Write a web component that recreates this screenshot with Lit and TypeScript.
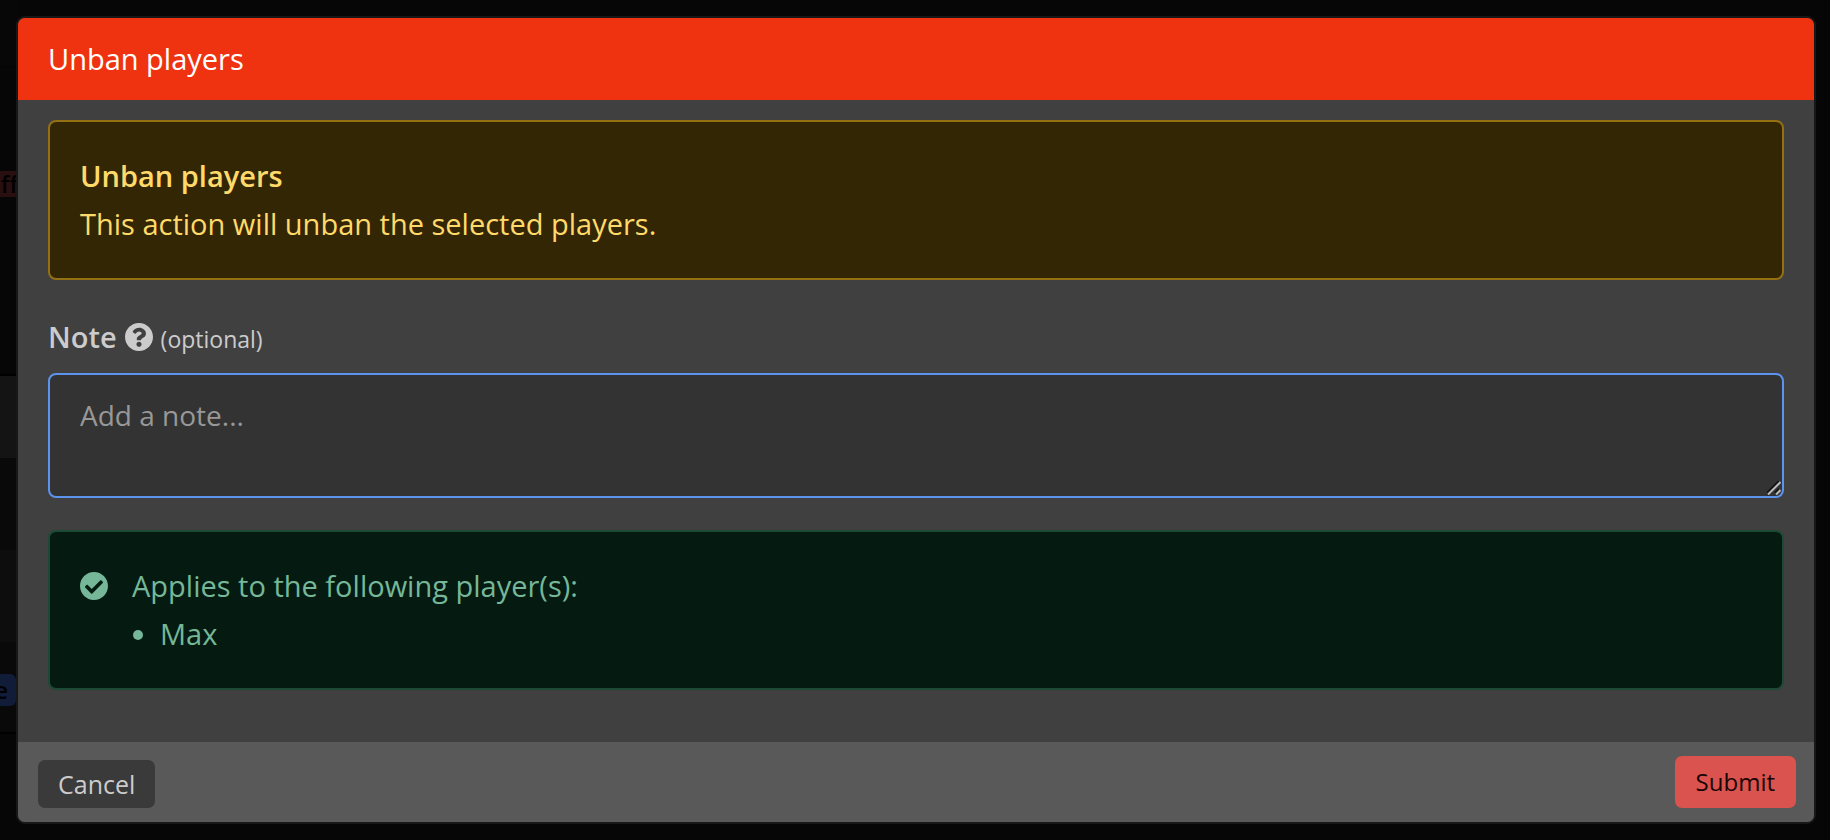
import { LitElement, html, css } from "lit";
import { customElement, property, state } from "lit/decorators.js";

@customElement("page-behind")
class PageBehind extends LitElement {
  static styles = css`
    :host {
      display: block;
      color: #000;
      font-size: 24px;
      font-weight: 600;
      line-height: 28px;
    }
    .top {
      height: 66px;
      border-bottom: 2px solid #050505;
      background: #070707;
    }
    .intro {
      height: 308px;
      padding-top: 103px;
      box-sizing: border-box;
      background: #060606;
      border-bottom: 2px solid #000;
    }
    .mark {
      display: flex;
      justify-content: flex-end;
      width: 18px;
      height: 26px;
      line-height: 26px;
      overflow: hidden;
      background: #2a0f10;
    }
    .row {
      height: 92px;
      box-sizing: border-box;
      background: #090909;
    }
    .head {
      height: 82px;
      background: #141414;
    }
    .alt {
      background: #0d0d0d;
    }
    .last {
      padding-top: 32px;
      border-bottom: 2px solid #000;
    }
    .badge {
      display: flex;
      justify-content: flex-end;
      width: 16px;
      height: 32px;
      padding-right: 8px;
      box-sizing: border-box;
      border-radius: 0 6px 6px 0;
      background: #111c38;
      line-height: 32px;
    }
  `;

  render() {
    return html`
      <div class="top"></div>
      <div class="intro"><span class="mark">eff</span></div>
      <div class="row head"></div>
      <div class="row"></div>
      <div class="row alt"></div>
      <div class="row last"><span class="badge">e</span></div>
    `;
  }
}

@customElement("unban-dialog")
class UnbanDialog extends LitElement {
  @property({ attribute: false }) players: string[] = [];
  @state() private note = "";

  static styles = css`
    :host {
      display: block;
      color: #ccc;
      font-size: 29px;
      line-height: 48px;
    }
    .dialog {
      overflow: hidden;
      border: 2px solid #181818;
      border-radius: 9px;
      background: #404040;
    }
    .header {
      padding: 17px 30px;
      background: #ef3311;
      color: #fff;
    }
    .title {
      margin: 0;
      font-size: 29px;
      font-weight: 400;
    }
    .body {
      display: flex;
      flex-direction: column;
      padding: 20px 30px 52px;
    }
    .callout {
      padding: 30px;
      border: 2px solid #947013;
      border-radius: 8px;
      background: #332604;
      color: #ffda6a;
    }
    .lead {
      margin: 0;
      font-size: 29px;
      font-weight: 600;
    }
    .text {
      margin: 0;
    }
    .label {
      display: flex;
      align-items: baseline;
      gap: 8px;
      margin: 33px 0 12px;
    }
    .name {
      font-weight: 600;
    }
    .icon {
      display: block;
      width: 28px;
      height: 28px;
      flex: none;
    }
    .help {
      align-self: center;
    }
    .optional {
      font-size: 23px;
      line-height: 34px;
    }
    .field {
      display: grid;
      position: relative;
    }
    .note {
      display: block;
      width: 100%;
      height: 125px;
      box-sizing: border-box;
      padding: 16px 30px;
      border: 2px solid #5c93ed;
      border-radius: 8px;
      outline: none;
      background: #333;
      color: #ccc;
      font: inherit;
      font-size: 28px;
      resize: none;
    }
    .note::placeholder {
      color: #989898;
    }
    .grip {
      position: absolute;
      right: 3px;
      bottom: 3px;
      width: 14px;
      height: 14px;
      pointer-events: none;
    }
    .applies {
      display: flex;
      gap: 24px;
      margin-top: 32px;
      border-color: #1d4a35;
      background: #051b11;
      color: #75b798;
    }
    .applies .icon {
      margin-top: 10px;
    }
    .players {
      margin: 0;
      padding-left: 28px;
    }
    .footer {
      display: flex;
      align-items: flex-end;
      justify-content: space-between;
      padding: 14px 18px 14px 20px;
      background: #595959;
    }
    .button {
      margin: 0;
      border: 0;
      border-radius: 7px;
      font: inherit;
      font-size: 25px;
      line-height: 34px;
      cursor: pointer;
    }
    .cancel {
      padding: 7px 20px;
      background: #3a3a3a;
      color: #ccc;
    }
    .submit {
      padding: 9px 21px;
      background: #da534f;
      color: #180404;
      font-size: 24px;
    }
  `;

  private onInput(e: Event) {
    this.note = (e.target as HTMLTextAreaElement).value;
  }

  render() {
    return html`
      <section class="dialog" role="dialog" aria-labelledby="title">
        <header class="header"><h1 class="title" id="title">Unban players</h1></header>
        <div class="body">
          <div class="callout">
            <h2 class="lead">Unban players</h2>
            <p class="text">This action will unban the selected players.</p>
          </div>
          <label class="label" for="note">
            <span class="name">Note</span>
            <svg class="icon help" viewBox="8 8 496 496" fill="currentColor" aria-hidden="true">
              <path
                d="M504 256c0 137-111 248-248 248S8 393 8 256 119 8 256 8s248 111 248 248zM262.700 90c-54.500 0-89.300 23-116.500 63.800-3.500 5.300-2.400 12.400 2.700 16.300l34.700 26.300c5.200 3.900 12.600 3 16.700-2.100 17.900-22.700 30.100-35.800 57.300-35.800 20.400 0 45.700 13.100 45.700 33 0 15-12.400 22.700-32.500 34C247.100 238.500 216 254.900 216 296v4c0 6.600 5.400 12 12 12h56c6.600 0 12-5.400 12-12v-1.300c0-28.500 83.200-29.600 83.200-106.700 0-58-60.200-102-116.500-102zM256 338c-25.400 0-46 20.600-46 46s20.600 46 46 46 46-20.600 46-46-20.600-46-46-46z"
              />
            </svg>
            <span class="optional">(optional)</span>
          </label>
          <div class="field">
            <textarea
              class="note"
              id="note"
              placeholder="Add a note..."
              .value=${this.note}
              @input=${this.onInput}
            ></textarea>
            <svg class="grip" viewBox="0 0 14 14" fill="none" stroke-width="2" aria-hidden="true">
              <path d="M0 12L12 0M8 12L12 8" stroke="#111" />
              <path d="M1 13.500L13.500 1M9 13.500L13.500 9" stroke="#bbb" />
            </svg>
          </div>
          <div class="callout applies">
            <svg class="icon" viewBox="8 8 496 496" fill="currentColor" aria-hidden="true">
              <path
                d="M504 256c0 137-111 248-248 248S8 393 8 256 119 8 256 8s248 111 248 248zM227.300 387.300l184-184c6.200-6.200 6.200-16.400 0-22.600l-22.600-22.600c-6.200-6.200-16.400-6.200-22.600 0L216 308.100l-70.100-70.100c-6.200-6.200-16.400-6.200-22.600 0l-22.600 22.600c-6.200 6.200-6.200 16.400 0 22.600l104 104c6.200 6.300 16.400 6.300 22.600.1z"
              />
            </svg>
            <div>
              <p class="text">Applies to the following player(s):</p>
              <ul class="players">
                ${this.players.map((p) => html`<li>${p}</li>`)}
              </ul>
            </div>
          </div>
        </div>
        <footer class="footer">
          <button class="button cancel" type="button">Cancel</button>
          <button class="button submit" type="button">Submit</button>
        </footer>
      </section>
    `;
  }
}

@customElement("app-root")
class AppRoot extends LitElement {
  static styles = css`
    :host {
      display: block;
      position: relative;
      min-height: 100vh;
      overflow: hidden;
      background: #060606;
      font-family: "Open Sans", "Noto Sans", sans-serif;
    }
    .behind {
      position: absolute;
      top: 0;
      bottom: 0;
      left: 0;
      width: 18px;
    }
    .modal {
      position: relative;
      margin: 16px 14px 16px 16px;
    }
  `;

  render() {
    return html`
      <page-behind class="behind" aria-hidden="true"></page-behind>
      <unban-dialog class="modal" .players=${["Max"]}></unban-dialog>
    `;
  }
}
